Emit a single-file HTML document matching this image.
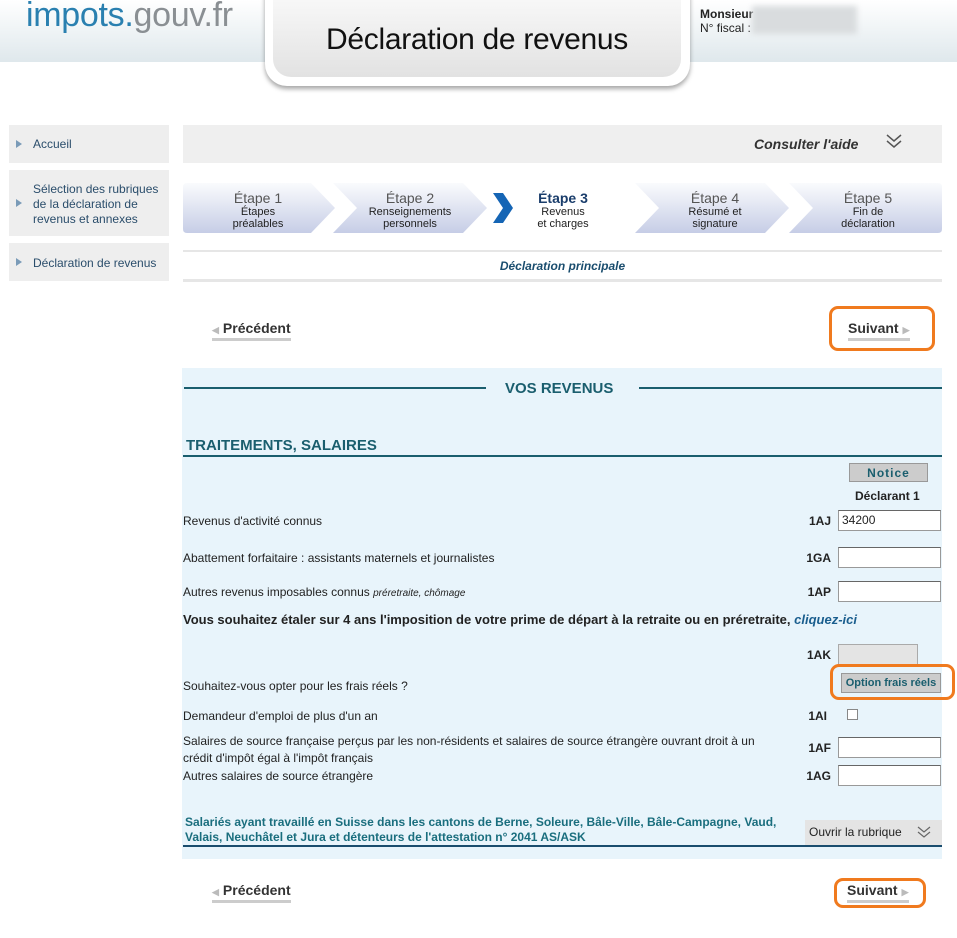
<!DOCTYPE html>
<html><head><meta charset="utf-8"><style>
*{box-sizing:border-box;margin:0;padding:0}
body{width:957px;height:938px;background:#fff;font-family:"Liberation Sans",Arial,sans-serif;font-size:12px;color:#222;position:relative;overflow:hidden}
.abs{position:absolute}
.hdr{left:0;top:0;width:957px;height:62px;background:linear-gradient(#fff,#dfe8ec)}
.logo{left:26px;top:-4px;font-size:34px;color:#2a80b0;letter-spacing:-0.3px}
.logo span{color:#8a8f93}
.tab{left:265px;top:-10px;width:425px;height:96px;border-radius:0 0 22px 22px;background:#fff;box-shadow:0 3px 5px rgba(0,0,0,.35)}
.tabin{left:273px;top:-10px;width:408px;height:87px;border-radius:0 0 18px 18px;background:linear-gradient(#fafafa,#e2e2e2);text-align:center;font-size:30px;color:#111;padding-top:33px;letter-spacing:-0.3px}
.who{left:700px;top:7px;font-size:12px;line-height:14px}
.blur{left:752px;top:6px;width:105px;height:28px;background:#d9dcde;filter:blur(3px)}
.nav{left:9px;width:160px;background:#eee;color:#2a4d6b;font-size:12px;line-height:15px;padding-left:24px}
.nav:before{content:"";position:absolute;left:7px;top:50%;margin-top:-4px;border-left:6px solid #7a9bb8;border-top:4px solid transparent;border-bottom:4px solid transparent}
.help{left:183px;top:125px;width:759px;height:38px;background:#efefef}
.steps{left:183px;top:183px;width:759px;height:50px}
.st{position:absolute;top:0;height:50px;text-align:center;font-size:11px;line-height:12px;color:#222;padding-top:8px}
.st b{display:block;font-size:14px;font-weight:normal;color:#555;line-height:15px}
.blue{left:182px;top:368px;width:760px;height:491px;background:#e8f4fb}
.lbl{left:183px;font-size:12px}
.code{font-weight:bold;font-size:12px;right:127px;text-align:right}
.inp{left:838px;width:103px;height:21px;background:#fff;border:1px solid #999;border-top-color:#666}
.btn{font-weight:bold;font-size:14px;color:#333}
.orange{border:3px solid #f07a1e;border-radius:9px}
</style></head><body>
<div class="abs hdr"></div>
<div class="abs logo">impots.<span>gouv.fr</span></div>
<div class="abs tab"></div>
<div class="abs tabin">Déclaration de revenus</div>
<div class="abs who"><b>Monsieur</b><br>N° fiscal :</div>
<div class="abs blur"></div>

<div class="abs nav" style="top:125px;height:38px;padding-top:12px">Accueil</div>
<div class="abs nav" style="top:170px;height:66px;padding-top:12px">Sélection des rubriques de la déclaration de revenus et annexes</div>
<div class="abs nav" style="top:243px;height:38px;padding-top:13px">Déclaration de revenus</div>

<div class="abs help"></div>
<div class="abs" style="left:754px;top:136px;font-size:14px;font-style:italic;font-weight:bold;color:#333">Consulter l'aide</div>
<svg class="abs" style="left:885px;top:133px" width="18" height="16"><path d="M2 2l7 6 7-6M2 8l7 6 7-6" fill="none" stroke="#555" stroke-width="1.5"/></svg>

<div class="abs steps">
<svg class="abs" style="left:0;top:0" width="759" height="50">
<defs><linearGradient id="g" x1="0" y1="0" x2="0" y2="1"><stop offset="0" stop-color="#fafbfd"/><stop offset="1" stop-color="#c6cde6"/></linearGradient></defs>
<path d="M4 0H128L152 25 128 50H4Q0 50 0 46V4Q0 0 4 0Z" fill="url(#g)"/>
<path d="M150 0H280L304 25 280 50H150L174 25Z" fill="url(#g)"/>
<path d="M310 10L320 10 330 25 320 40 310 40 320 25Z" fill="#1565b5"/>
<path d="M452 0H582L606 25 582 50H452L476 25Z" fill="url(#g)"/>
<path d="M606 0H755Q759 0 759 4V46Q759 50 755 50H606L630 25Z" fill="url(#g)"/>
</svg>
<div class="st" style="left:20px;width:110px"><b>Étape 1</b>Étapes<br>préalables</div>
<div class="st" style="left:172px;width:110px"><b>Étape 2</b>Renseignements<br>personnels</div>
<div class="st" style="left:325px;width:110px"><b style="color:#1a3d6b;font-weight:bold">Étape 3</b>Revenus<br>et charges</div>
<div class="st" style="left:477px;width:110px"><b>Étape 4</b>Résumé et<br>signature</div>
<div class="st" style="left:630px;width:110px"><b>Étape 5</b>Fin de<br>déclaration</div>
</div>

<div class="abs" style="left:183px;top:250px;width:759px;height:2px;background:#e6e6e6"></div>
<div class="abs" style="left:183px;top:259px;width:759px;text-align:center;font-size:12px;font-style:italic;font-weight:bold;color:#1a4d6e">Déclaration principale</div>
<div class="abs" style="left:183px;top:279px;width:759px;height:3px;background:#e6e6e6"></div>

<div class="abs btn" style="left:212px;top:320px;border-bottom:3px solid #ccc;padding-bottom:2px"><span style="color:#bbb;font-size:9px;margin-right:4px">◀</span>Précédent</div>
<div class="abs orange" style="left:829px;top:306px;width:106px;height:45px"></div>
<div class="abs btn" style="left:848px;top:320px;border-bottom:3px solid #ccc;padding-bottom:2px">Suivant<span style="color:#bbb;font-size:9px;margin-left:4px">▶</span></div>

<div class="abs blue"></div>
<div class="abs" style="left:184px;top:387px;width:302px;height:2px;background:#1a5e6e"></div>
<div class="abs" style="left:639px;top:387px;width:303px;height:2px;background:#1a5e6e"></div>
<div class="abs" style="left:505px;top:380px;font-size:15px;font-weight:bold;color:#1a5e6e">VOS REVENUS</div>
<div class="abs" style="left:186px;top:437px;font-size:15px;font-weight:bold;color:#1a5e6e">TRAITEMENTS, SALAIRES</div>
<div class="abs" style="left:183px;top:455px;width:759px;height:2px;background:#1a5e6e"></div>
<div class="abs" style="left:849px;top:463px;width:79px;height:19px;background:#ccc;border:1px solid #999;text-align:center;font-size:12px;font-weight:bold;color:#1a5e6e;letter-spacing:1px;padding-top:2px">Notice</div>
<div class="abs" style="left:855px;top:489px;font-weight:bold;font-size:12px">Déclarant 1</div>

<div class="abs lbl" style="top:514px">Revenus d'activité connus</div>
<div class="abs code" style="left:790px;width:41px;top:514px">1AJ</div>
<div class="abs inp" style="top:510px;padding:2px 3px">34200</div>
<div class="abs lbl" style="top:551px">Abattement forfaitaire : assistants maternels et journalistes</div>
<div class="abs code" style="left:790px;width:41px;top:551px">1GA</div>
<div class="abs inp" style="top:547px"></div>
<div class="abs lbl" style="top:585px">Autres revenus imposables connus <i style="font-size:10px">préretraite, chômage</i></div>
<div class="abs code" style="left:790px;width:41px;top:585px">1AP</div>
<div class="abs inp" style="top:581px"></div>
<div class="abs" style="left:183px;top:612px;font-size:13px;font-weight:bold">Vous souhaitez étaler sur 4 ans l'imposition de votre prime de départ à la retraite ou en préretraite, <i style="color:#1a5e8e">cliquez-ici</i></div>
<div class="abs code" style="left:790px;width:41px;top:648px">1AK</div>
<div class="abs" style="left:838px;top:644px;width:80px;height:22px;background:#e4e4e4;border:1px solid #aaa"></div>
<div class="abs lbl" style="top:679px">Souhaitez-vous opter pour les frais réels ?</div>
<div class="abs orange" style="left:830px;top:664px;width:125px;height:36px"></div>
<div class="abs" style="left:841px;top:673px;width:100px;height:20px;background:#ccc;border:1px solid #999;font-size:11px;font-weight:bold;color:#1a5e6e;text-align:center;padding-top:3px">Option frais réels</div>
<div class="abs lbl" style="top:709px">Demandeur d'emploi de plus d'un an</div>
<div class="abs code" style="left:790px;width:37px;top:709px">1AI</div>
<div class="abs" style="left:847px;top:709px;width:11px;height:11px;background:#fff;border:1px solid #888"></div>
<div class="abs lbl" style="top:733px;width:600px;line-height:17px">Salaires de source française perçus par les non-résidents et salaires de source étrangère ouvrant droit à un crédit d'impôt égal à l'impôt français</div>
<div class="abs code" style="left:790px;width:41px;top:741px">1AF</div>
<div class="abs inp" style="top:737px"></div>
<div class="abs lbl" style="top:769px">Autres salaires de source étrangère</div>
<div class="abs code" style="left:790px;width:41px;top:769px">1AG</div>
<div class="abs inp" style="top:765px"></div>
<div class="abs" style="left:185px;top:815px;font-size:12px;font-weight:bold;color:#1a6e7e;line-height:15px">Salariés ayant travaillé en Suisse dans les cantons de Berne, Soleure, Bâle-Ville, Bâle-Campagne, Vaud,<br>Valais, Neuchâtel et Jura et détenteurs de l'attestation n° 2041 AS/ASK</div>
<div class="abs" style="left:805px;top:820px;width:137px;height:25px;background:#e4e4e4;font-size:12px;padding:5px 0 0 4px">Ouvrir la rubrique</div>
<svg class="abs" style="left:917px;top:826px" width="14" height="12"><path d="M1 1l6 5 6-5M1 6l6 5 6-5" fill="none" stroke="#666" stroke-width="1.2"/></svg>
<div class="abs" style="left:183px;top:845px;width:759px;height:2px;background:#1a4d6e"></div>

<div class="abs btn" style="left:212px;top:882px;border-bottom:3px solid #ccc;padding-bottom:2px"><span style="color:#bbb;font-size:9px;margin-right:4px">◀</span>Précédent</div>
<div class="abs orange" style="left:834px;top:878px;width:92px;height:30px"></div>
<div class="abs btn" style="left:847px;top:882px;border-bottom:3px solid #ccc;padding-bottom:2px">Suivant<span style="color:#bbb;font-size:9px;margin-left:4px">▶</span></div>
</body></html>
